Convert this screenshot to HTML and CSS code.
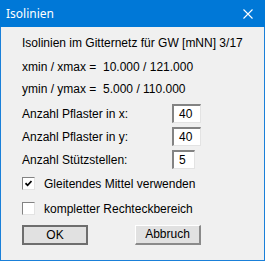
FILE: index.html
```html
<!doctype html>
<html>
<head>
  <title>Isolinien</title>
  <link rel="stylesheet" href="styles.css">
</head>
<body>

  <div class="window">
    <div class="titlebar">
      <span class="title">Isolinien</span>
      <svg class="close" width="10" height="10" viewBox="0 0 10 10">
        <path d="M0.5 0.5 L9.5 9.5 M9.5 0.5 L0.5 9.5" stroke="#fff" stroke-width="1.1" fill="none"/>
      </svg>
    </div>

    <div class="content">
      <div class="line first">Isolinien im Gitternetz für GW [mNN] 3/17</div>
      <div class="line second">xmin / xmax = &nbsp;10.000 / 121.000</div>
      <div class="line third">ymin / ymax = &nbsp;5.000 / 110.000</div>

      <div class="fields">
        <div class="field">
          <span class="label">Anzahl Pflaster in x:</span>
          <span class="edit">40</span>
        </div>
        <div class="field">
          <span class="label">Anzahl Pflaster in y:</span>
          <span class="edit">40</span>
        </div>
        <div class="field">
          <span class="label">Anzahl Stützstellen:</span>
          <span class="edit short">5</span>
        </div>
      </div>

      <div class="check checked-row">
        <span class="box">
          <svg width="7" height="7" viewBox="0 0 7 7">
            <path d="M0.5 3.2 L2.6 5.3 L6.5 1" stroke="#000" stroke-width="1.7" fill="none"/>
          </svg>
        </span>
        <span>Gleitendes Mittel verwenden</span>
      </div>
      <div class="check">
        <span class="box"></span>
        <span>kompletter Rechteckbereich</span>
      </div>

      <div class="buttons">
        <div class="button default">OK</div>
        <div class="button">Abbruch</div>
      </div>
    </div>
  </div>

</body>
</html>
```

FILE: styles.css
```css
body {
  margin: 0;
  background: #fff;
}

.window {
  width: 263px;
  height: 260px;
  border: 1px solid #1a80d9;
  border-top: none;
  background: #f0f0f0;
  font-family: "Liberation Sans", Arial, sans-serif;
  font-size: 12px;
  color: #000;
}

.titlebar {
  height: 27px;
  margin: 0 -1px;
  background: #0078d7;
  display: flex;
  align-items: center;
  justify-content: space-between;
  padding: 0 12px 0 6px;
}

.title {
  font-family: "Noto Sans", sans-serif;
  font-size: 12px;
  color: #fff;
  padding-bottom: 1px;
}

.close {
  display: block;
}

.content {
  padding: 7px 0 0 21px;
}

.line {
  height: 18px;
  line-height: 18px;
}

.second {
  margin-top: 6px;
}

.third {
  margin-top: 4px;
}

.fields {
  margin-top: 6px;
  display: flex;
  flex-direction: column;
  gap: 4px;
}

.field {
  display: flex;
  align-items: center;
  height: 19px;
}

.label {
  width: 150px;
}

.edit {
  box-sizing: border-box;
  width: 29px;
  height: 19px;
  background: #fff;
  border-top: 2px solid #838383;
  border-left: 2px solid #838383;
  border-right: 1px solid #e3e3e3;
  border-bottom: 1px solid #e3e3e3;
  padding-left: 5px;
  line-height: 16px;
}

.edit.short {
  width: 23px;
}

.check {
  display: flex;
  align-items: center;
  height: 13px;
  gap: 9px;
  margin-top: 12px;
}

.checked-row {
  margin-top: 8px;
}

.box {
  box-sizing: border-box;
  width: 13px;
  height: 13px;
  background: #fff;
  border-top: 1px solid #838383;
  border-left: 1px solid #838383;
  border-right: 1px solid #e3e3e3;
  border-bottom: 1px solid #e3e3e3;
  display: flex;
  align-items: center;
  justify-content: center;
}

.box svg {
  display: block;
}

.buttons {
  display: flex;
  gap: 47px;
  margin-top: 10px;
}

.button {
  box-sizing: border-box;
  width: 66px;
  height: 20px;
  background: #e1e1e1;
  border-top: 1px solid #fff;
  border-left: 1px solid #fff;
  border-right: 2px solid #8a8a8a;
  border-bottom: 2px solid #8a8a8a;
  text-align: center;
  line-height: 17px;
}

.button.default {
  border: 2px solid #6e6e6e;
  line-height: 16px;
}
```
